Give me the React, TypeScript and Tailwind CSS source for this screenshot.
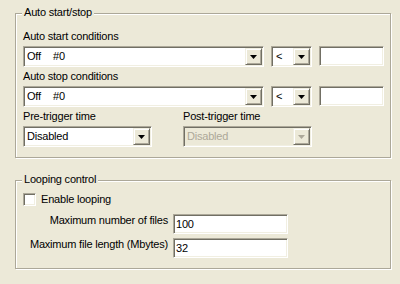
import React from "react";

const sunken =
  "border border-t-[#ACA899] border-l-[#ACA899] border-r-white border-b-white shadow-[inset_1px_1px_0_#716F64,inset_-1px_-1px_0_#F1EFE2]";

function Arrow({ disabled }: { disabled?: boolean }) {
  return (
    <svg width="7" height="4" viewBox="0 0 7 4">
      <polygon points="0,0 7,0 3.5,4" fill={disabled ? "#ACA899" : "#000"} />
    </svg>
  );
}

function DropButton({ disabled }: { disabled?: boolean }) {
  return (
    <div className="w-[17px] h-[17px] shrink-0 bg-[#ECE9D8] border border-t-[#F1EFE2] border-l-[#F1EFE2] border-r-[#716F64] border-b-[#716F64] shadow-[inset_1px_1px_0_#fff,inset_-1px_-1px_0_#ACA899] flex items-center justify-center">
      <Arrow disabled={disabled} />
    </div>
  );
}

function Combo({
  width,
  children,
  disabled,
}: {
  width: string;
  children?: React.ReactNode;
  disabled?: boolean;
}) {
  return (
    <div
      className={`${width} h-[21px] ${sunken} p-[1px] flex items-stretch ${
        disabled ? "bg-[#ECE9D8]" : "bg-white"
      }`}
    >
      <div
        className={`flex-1 flex items-center pl-[2px] whitespace-pre ${
          disabled ? "text-[#ACA899]" : "text-black"
        }`}
      >
        {children}
      </div>
      <DropButton disabled={disabled} />
    </div>
  );
}

function Edit({ width, value }: { width: string; value?: string }) {
  return (
    <div className={`${width} h-[20px] ${sunken} bg-white flex items-center pl-[2px] text-black`}>
      {value}
    </div>
  );
}

function Group({
  title,
  className,
  children,
}: {
  title: string;
  className: string;
  children: React.ReactNode;
}) {
  return (
    <div
      className={`relative w-[376px] border border-[#ACA899] shadow-[inset_1px_1px_0_#fff,1px_1px_0_#fff] ${className}`}
    >
      <span className="absolute left-[6px] top-[-8px] px-[2px] bg-[#ECE9D8] leading-[13px]">
        {title}
      </span>
      {children}
    </div>
  );
}

function OffValue() {
  return (
    <>
      <span className="inline-block w-[26px]">Off</span>
      <span>#0</span>
    </>
  );
}

export default function App() {
  return (
    <div className="w-[400px] h-[284px] bg-[#ECE9D8] overflow-hidden pt-[13px] pl-[15px] font-['Liberation_Sans',Arial,sans-serif] text-[11px] leading-[13px] tracking-[-0.2px] text-black">
      <Group title="Auto start/stop" className="h-[145px] pt-[16px] pl-[7px]">
        <div>Auto start conditions</div>
        <div className="mt-[3px] flex gap-[7px]">
          <Combo width="w-[241px]">
            <OffValue />
          </Combo>
          <Combo width="w-[41px]">
            <span className="pl-[1px]">&lt;</span>
          </Combo>
          <Edit width="w-[65px]" />
        </div>
        <div className="mt-[3px]">Auto stop conditions</div>
        <div className="mt-[3px] flex gap-[7px]">
          <Combo width="w-[241px]">
            <OffValue />
          </Combo>
          <Combo width="w-[41px]">
            <span className="pl-[1px]">&lt;</span>
          </Combo>
          <Edit width="w-[65px]" />
        </div>
        <div className="mt-[3px] flex gap-[31px]">
          <div>
            <div>Pre-trigger time</div>
            <div className="mt-[3px]">
              <Combo width="w-[129px]">Disabled</Combo>
            </div>
          </div>
          <div>
            <div>Post-trigger time</div>
            <div className="mt-[3px]">
              <Combo width="w-[129px]" disabled>
                Disabled
              </Combo>
            </div>
          </div>
        </div>
      </Group>

      <Group title="Looping control" className="mt-[22px] h-[89px]">
        <div className="mt-[12px] pl-[7px] flex items-center gap-[5px]">
          <div className={`w-[13px] h-[13px] ${sunken} bg-white`} />
          <span>Enable looping</span>
        </div>
        <div className="mt-[8px] flex items-start">
          <div className="w-[152px] text-right">Maximum number of files</div>
          <div className="ml-[5px]">
            <Edit width="w-[115px]" value="100" />
          </div>
        </div>
        <div className="mt-[4px] flex items-start">
          <div className="w-[152px] text-right">Maximum file length (Mbytes)</div>
          <div className="ml-[5px]">
            <Edit width="w-[115px]" value="32" />
          </div>
        </div>
      </Group>
    </div>
  );
}
